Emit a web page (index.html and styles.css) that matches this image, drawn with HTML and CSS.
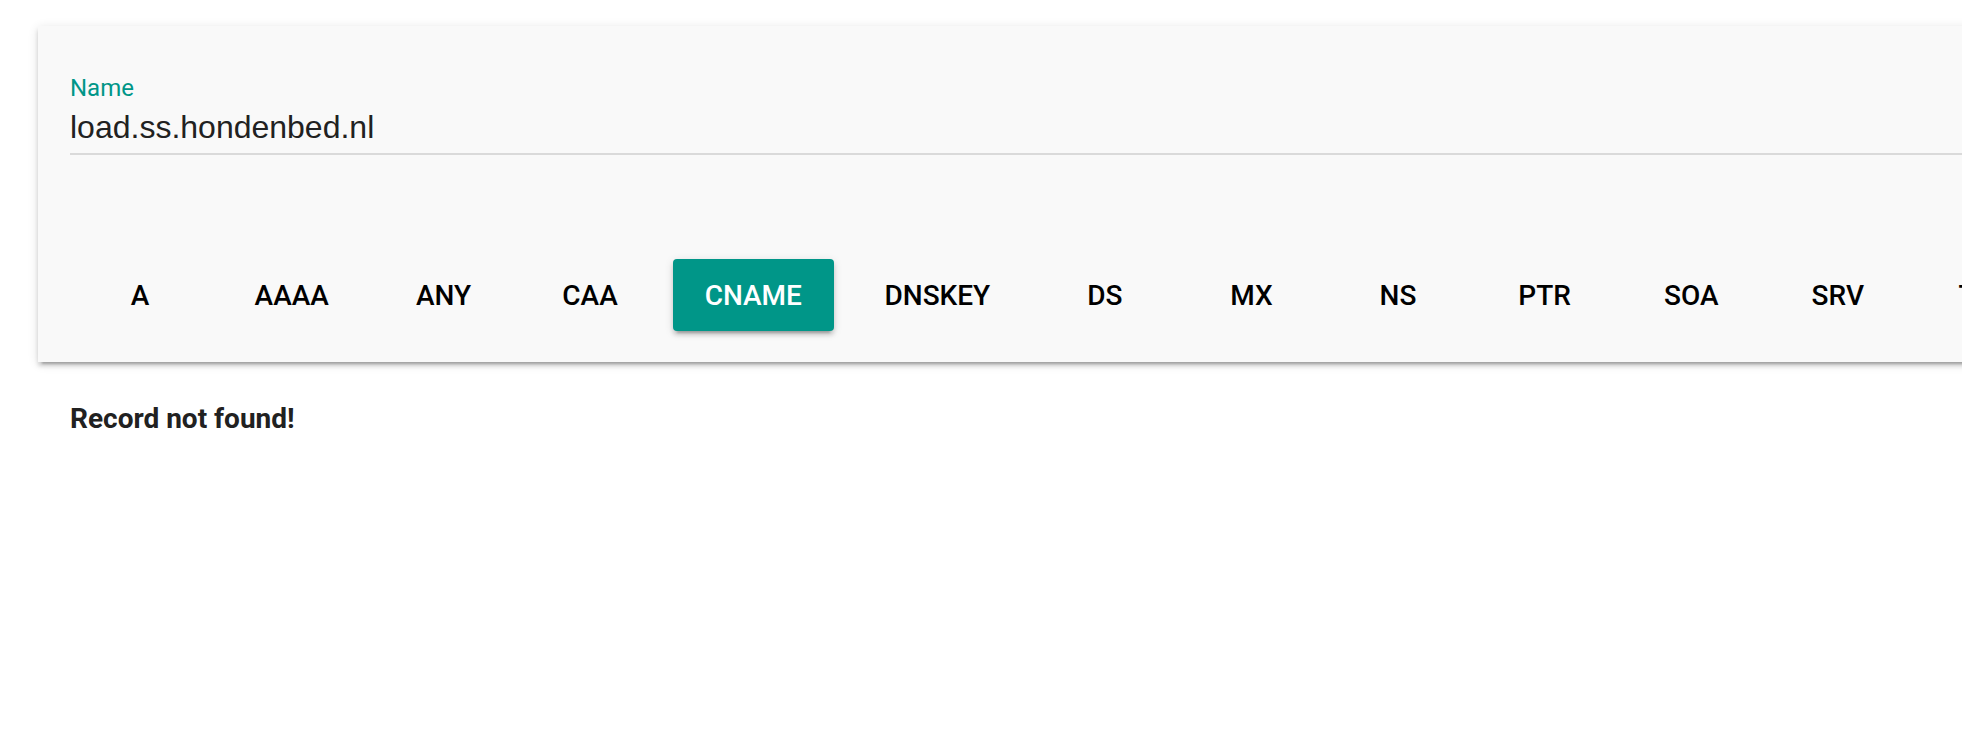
FILE: index.html
```html
<!DOCTYPE html>
<html>
<head>
<meta charset="utf-8">
<title>DNS lookup</title>
<link rel="stylesheet" href="styles.css">
</head>
<body>
<main class="page">
  <section class="card">
    <div class="field">
      <label class="field-label">Name</label>
      <div class="field-input">load.ss.hondenbed.nl</div>
    </div>
    <div class="types">
      <button class="type-btn">A</button>
      <button class="type-btn">AAAA</button>
      <button class="type-btn">ANY</button>
      <button class="type-btn">CAA</button>
      <button class="type-btn active">CNAME</button>
      <button class="type-btn">DNSKEY</button>
      <button class="type-btn">DS</button>
      <button class="type-btn">MX</button>
      <button class="type-btn">NS</button>
      <button class="type-btn">PTR</button>
      <button class="type-btn">SOA</button>
      <button class="type-btn">SRV</button>
      <button class="type-btn">TXT</button>
    </div>
  </section>
  <p class="message">Record not found!</p>
</main>
</body>
</html>
```
FILE: styles.css
```css
html, body {
  margin: 0;
  padding: 0;
  background: #ffffff;
  overflow: hidden;
}

.page {
  padding: 26px 0 0 38px;
  font-family: Roboto, "Liberation Sans", sans-serif;
}

.card {
  width: 2300px;
  box-sizing: border-box;
  background: #f9f9f9;
  padding: 48px 32px 31px 32px;
  box-shadow: 0 6px 2px -4px rgba(0, 0, 0, 0.2),
              0 4px 4px 0 rgba(0, 0, 0, 0.14),
              0 2px 10px 0 rgba(0, 0, 0, 0.12);
}

.field {
  display: flex;
  flex-direction: column;
}

.field-label {
  font-family: Roboto, sans-serif;
  font-size: 24px;
  line-height: 28px;
  height: 28px;
  color: #009688;
}

.field-input {
  margin-top: 7px;
  font-family: "Liberation Sans", Arial, sans-serif;
  font-size: 32px;
  line-height: 37px;
  color: #212121;
  padding-bottom: 7px;
  border-bottom: 2px solid #dadada;
}

.types {
  display: flex;
  gap: 18.6px;
  margin-top: 104px;
  padding-left: 6px;
}

.type-btn {
  flex: none;
  min-width: 128px;
  height: 72px;
  padding: 0 32px;
  box-sizing: border-box;
  border: none;
  border-radius: 4px;
  background: transparent;
  font-family: Roboto, sans-serif;
  font-size: 28px;
  font-weight: 500;
  letter-spacing: 0;
  text-transform: uppercase;
  color: #000000;
  line-height: 33px;
  cursor: pointer;
}

.type-btn.active {
  background: #009688;
  color: #ffffff;
  box-shadow: 0 6px 2px -4px rgba(0, 0, 0, 0.2),
              0 4px 4px 0 rgba(0, 0, 0, 0.14),
              0 2px 10px 0 rgba(0, 0, 0, 0.12);
}

.message {
  margin: 40px 0 0 32px;
  font-family: Roboto, sans-serif;
  font-size: 28px;
  font-weight: 700;
  line-height: 33px;
  color: #212121;
}
```
